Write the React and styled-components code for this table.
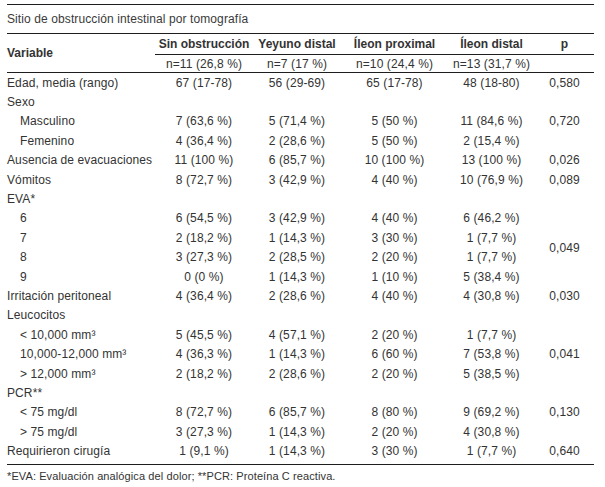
import React from "react";
import styled, { createGlobalStyle } from "styled-components";

const Global = createGlobalStyle`
  html, body { margin: 0; padding: 0; background: #fff; }
  body { font-family: "Liberation Sans", Arial, sans-serif; }
`;

const Page = styled.div`
  width: 587px;
  padding: 4px 0 0 7px;
  color: #333;
  font-family: "Liberation Sans", Arial, sans-serif;
  font-size: 12px;
  letter-spacing: 0.1px;
`;

const Title = styled.div`
  box-sizing: border-box;
  height: 30px;
  border-top: 1px solid #1e1e1e;
  border-bottom: 1px solid #1e1e1e;
  display: flex;
  align-items: center;
  color: #3a3a3a;
`;

const Grid = styled.div`
  display: grid;
  grid-template-columns: 148px 98px 88px 107px 87px 59px;
  grid-template-rows: 21px 18px repeat(20, 19.4px);
  padding-bottom: 3px;
  border-bottom: 1px solid #1e1e1e;
`;

const Head = styled.div`
  box-sizing: border-box;
  display: flex;
  align-items: center;
  justify-content: ${(p) => (p.$left ? "flex-start" : "center")};
  font-weight: bold;
  letter-spacing: 0;
  border-bottom: 1px solid #1e1e1e;
  grid-row: ${(p) => (p.$rows ? `span ${p.$rows}` : "auto")};
  white-space: nowrap;
`;

const Sub = styled.div`
  box-sizing: border-box;
  display: flex;
  align-items: center;
  justify-content: center;
  border-bottom: 1px solid #1e1e1e;
  white-space: nowrap;
`;

const Label = styled.div`
  display: flex;
  align-items: center;
  padding-left: ${(p) => (p.$indent ? "13px" : "0")};
  white-space: nowrap;
`;

const Value = styled.div`
  display: flex;
  align-items: center;
  justify-content: center;
  white-space: nowrap;
`;

const PValue = styled(Value)`
  grid-row: ${(p) => (p.$rows ? `span ${p.$rows}` : "auto")};
`;

const Footnote = styled.div`
  padding-top: 4px;
  font-size: 11px;
  line-height: 14px;
  color: #333;
`;

const rows = [
  { label: "Edad, media (rango)", v: ["67 (17-78)", "56 (29-69)", "65 (17-78)", "48 (18-80)"], p: "0,580" },
  { label: "Sexo", v: ["", "", "", ""], p: "" },
  { label: "Masculino", indent: true, v: ["7 (63,6 %)", "5 (71,4 %)", "5 (50 %)", "11 (84,6 %)"], p: "0,720" },
  { label: "Femenino", indent: true, v: ["4 (36,4 %)", "2 (28,6 %)", "5 (50 %)", "2 (15,4 %)"], p: "" },
  { label: "Ausencia de evacuaciones", v: ["11 (100 %)", "6 (85,7 %)", "10 (100 %)", "13 (100 %)"], p: "0,026" },
  { label: "Vómitos", v: ["8 (72,7 %)", "3 (42,9 %)", "4 (40 %)", "10 (76,9 %)"], p: "0,089" },
  { label: "EVA*", v: ["", "", "", ""], p: "" },
  { label: "6", indent: true, v: ["6 (54,5 %)", "3 (42,9 %)", "4 (40 %)", "6 (46,2 %)"], p: "0,049", span: 4 },
  { label: "7", indent: true, v: ["2 (18,2 %)", "1 (14,3 %)", "3 (30 %)", "1 (7,7 %)"], skip: true },
  { label: "8", indent: true, v: ["3 (27,3 %)", "2 (28,5 %)", "2 (20 %)", "1 (7,7 %)"], skip: true },
  { label: "9", indent: true, v: ["0 (0 %)", "1 (14,3 %)", "1 (10 %)", "5 (38,4 %)"], skip: true },
  { label: "Irritación peritoneal", v: ["4 (36,4 %)", "2 (28,6 %)", "4 (40 %)", "4 (30,8 %)"], p: "0,030" },
  { label: "Leucocitos", v: ["", "", "", ""], p: "" },
  { label: "< 10,000 mm³", indent: true, v: ["5 (45,5 %)", "4 (57,1 %)", "2 (20 %)", "1 (7,7 %)"], p: "0,041", span: 3 },
  { label: "10,000-12,000 mm³", indent: true, v: ["4 (36,3 %)", "1 (14,3 %)", "6 (60 %)", "7 (53,8 %)"], skip: true },
  { label: "> 12,000 mm³", indent: true, v: ["2 (18,2 %)", "2 (28,6 %)", "2 (20 %)", "5 (38,5 %)"], skip: true },
  { label: "PCR**", v: ["", "", "", ""], p: "" },
  { label: "< 75 mg/dl", indent: true, v: ["8 (72,7 %)", "6 (85,7 %)", "8 (80 %)", "9 (69,2 %)"], p: "0,130" },
  { label: "> 75 mg/dl", indent: true, v: ["3 (27,3 %)", "1 (14,3 %)", "2 (20 %)", "4 (30,8 %)"], p: "" },
  { label: "Requirieron cirugía", v: ["1 (9,1 %)", "1 (14,3 %)", "3 (30 %)", "1 (7,7 %)"], p: "0,640" },
];

const groups = [
  ["Sin obstrucción", "n=11 (26,8 %)"],
  ["Yeyuno distal", "n=7 (17 %)"],
  ["Íleon proximal", "n=10 (24,4 %)"],
  ["Íleon distal", "n=13 (31,7 %)"],
  ["p", ""],
];

export default function App() {
  return (
    <>
      <Global />
      <Page>
        <Title>Sitio de obstrucción intestinal por tomografía</Title>
        <Grid>
          <Head $left $rows={2}>Variable</Head>
          {groups.map(([h]) => (
            <Head key={h}>{h}</Head>
          ))}
          {groups.map(([h, n]) => (
            <Sub key={h + "n"}>{n}</Sub>
          ))}
          {rows.map((r, i) => (
            <React.Fragment key={i}>
              <Label $indent={r.indent}>{r.label}</Label>
              {r.v.map((v, j) => (
                <Value key={j}>{v}</Value>
              ))}
              {!r.skip && <PValue $rows={r.span}>{r.p}</PValue>}
            </React.Fragment>
          ))}
        </Grid>
        <Footnote>*EVA: Evaluación analógica del dolor; **PCR: Proteína C reactiva.</Footnote>
      </Page>
    </>
  );
}
